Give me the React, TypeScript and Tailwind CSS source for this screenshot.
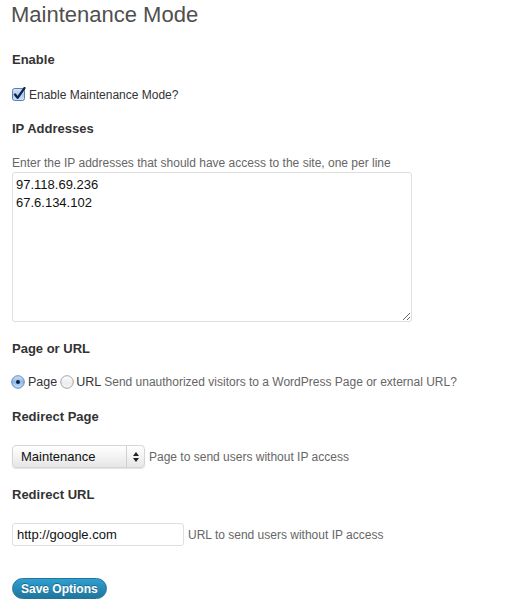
import React from "react";

function CheckBox() {
  return (
    <svg width="14" height="14" viewBox="0 0 14 14" className="shrink-0">
      <defs>
        <linearGradient id="cbg" x1="0" y1="0" x2="0" y2="1">
          <stop offset="0" stopColor="#d8e8f8" />
          <stop offset="0.5" stopColor="#a9c9ee" />
          <stop offset="1" stopColor="#cfe4fb" />
        </linearGradient>
      </defs>
      <rect x="0.5" y="1.5" width="12" height="12" rx="2" fill="url(#cbg)" stroke="#5b7fb0" />
      <path d="M3 7.5 L5.6 10.8 L12.5 1" fill="none" stroke="#13224a" strokeWidth="2.2" strokeLinecap="round" strokeLinejoin="round" />
    </svg>
  );
}

function Radio({ checked }: { checked?: boolean }) {
  return (
    <svg width="14" height="14" viewBox="0 0 14 14" className="shrink-0">
      <defs>
        <linearGradient id="rbon" x1="0" y1="0" x2="0" y2="1">
          <stop offset="0" stopColor="#cfe3f8" />
          <stop offset="0.5" stopColor="#8fb9e8" />
          <stop offset="1" stopColor="#c8e0fb" />
        </linearGradient>
        <linearGradient id="rboff" x1="0" y1="0" x2="0" y2="1">
          <stop offset="0" stopColor="#ffffff" />
          <stop offset="0.6" stopColor="#ececec" />
          <stop offset="1" stopColor="#f7f7f7" />
        </linearGradient>
      </defs>
      <circle cx="7" cy="7" r="6.3" fill={checked ? "url(#rbon)" : "url(#rboff)"} stroke={checked ? "#5b7fb0" : "#9a9a9a"} strokeWidth="0.9" />
      {checked && <circle cx="7" cy="7" r="2" fill="#10203f" />}
    </svg>
  );
}

function Heading({ children, className }: { children: React.ReactNode; className: string }) {
  return <div className={"text-[13px] leading-4 font-bold text-[#333] " + className}>{children}</div>;
}

export default function App() {
  return (
    <div className="min-h-[616px] w-[506px] bg-white pl-3 font-['Liberation_Sans',Arial,sans-serif]">
      <div className="-ml-[1px] text-[22px] leading-[30px] text-[#4f4f4f]">Maintenance Mode</div>

      <Heading className="mt-[22px]">Enable</Heading>

      <div className="mt-[19px] flex h-4 items-start gap-[2px] text-[12px] leading-4 text-[#333]">
        <CheckBox />
        <span className="ml-[1px]">Enable Maintenance Mode?</span>
      </div>

      <Heading className="mt-[18px]">IP Addresses</Heading>

      <div className="mt-[18px] text-[12px] leading-4 text-[#666]">
        Enter the IP addresses that should have access to the site, one per line
      </div>

      <textarea
        className="mt-[1px] block h-[150px] w-[400px] resize rounded-[3px] border border-[#dfdfdf] px-[3px] pt-[3px] text-[13px] leading-[18px] text-[#111] outline-none"
        defaultValue={"97.118.69.236\n67.6.134.102"}
      />

      <Heading className="mt-[19px]">Page or URL</Heading>

      <div className="mt-[17px] flex h-4 items-center text-[13px] leading-4 text-[#333]">
        <span className="-ml-[1px]"><Radio checked /></span>
        <span className="ml-[3px] text-[12.5px]">Page</span>
        <span className="ml-[3px]"><Radio /></span>
        <span className="ml-[2px] text-[12.5px]">URL</span>
        <span className="ml-[3px] text-[12px] text-[#666]">
          Send unauthorized visitors to a WordPress Page or external URL?
        </span>
      </div>

      <Heading className="mt-[19px]">Redirect Page</Heading>

      <div className="mt-[20px] flex items-center">
        <div className="flex h-[23px] w-[133px] items-stretch rounded-[4px] border border-[#d6d6d6] bg-gradient-to-b from-[#ffffff] via-[#f3f3f3] to-[#e6e6e6] shadow-[0_1px_1px_rgba(0,0,0,0.12)]">
          <div className="flex flex-1 items-center pl-2 text-[13px] text-[#111]">Maintenance</div>
          <div className="flex w-[18px] flex-col items-center justify-center gap-[2px] border-l border-[#d0d0d0]">
            <svg width="6" height="4" viewBox="0 0 6 4"><path d="M0 4 L3 0 L6 4 Z" fill="#222" /></svg>
            <svg width="6" height="4" viewBox="0 0 6 4"><path d="M0 0 L3 4 L6 0 Z" fill="#222" /></svg>
          </div>
        </div>
        <span className="ml-[4px] text-[12px] text-[#666]">Page to send users without IP access</span>
      </div>

      <Heading className="mt-[19px]">Redirect URL</Heading>

      <div className="mt-[20px] flex items-center">
        <input
          className="h-[23px] w-[172px] rounded-[3px] border border-[#dfdfdf] px-[4px] text-[13px] text-[#111] outline-none"
          defaultValue="http://google.com"
        />
        <span className="ml-[4px] text-[12px] text-[#666]">URL to send users without IP access</span>
      </div>

      <button className="mt-[32px] flex h-[21px] items-center rounded-full border border-[#21759b] bg-gradient-to-b from-[#2e9fd2] to-[#21759b] px-[8px] text-[12px] font-bold text-white [text-shadow:0_-1px_0_rgba(0,0,0,0.3)]">
        Save Options
      </button>
    </div>
  );
}
